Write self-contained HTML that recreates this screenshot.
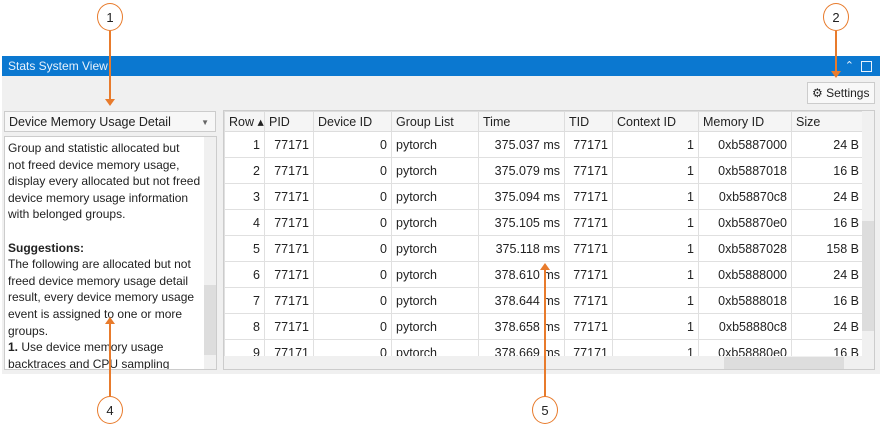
<!DOCTYPE html>
<html><head><style>
body{margin:0;width:882px;height:429px;background:#fff;font-family:"Liberation Sans",sans-serif;position:relative;overflow:hidden;color:#222}
.abs{position:absolute}
.bar{left:2px;top:56px;width:878px;height:20px;background:#0b78d0;color:#e8f2fc;font-size:12px;line-height:20px}
.panel{left:2px;top:76px;width:878px;height:298px;background:#f0f0f0}
.dd{left:4px;top:111px;width:212px;height:21px;background:#f7f7f7;border:1px solid #ccc;font-size:12.5px;line-height:21px;box-sizing:border-box;padding-left:4px}
.txt{left:4px;top:136px;width:213px;height:234px;background:#fff;border:1px solid #ccc;box-sizing:border-box;font-size:12px;line-height:16.6px;padding:3px 0 0 3px;overflow:hidden;white-space:nowrap}
table{border-collapse:collapse;font-size:12.5px;table-layout:fixed}
td,th{border:1px solid #e0e0e0;height:25px;padding:0 4px;white-space:nowrap;overflow:hidden}
th{font-weight:normal;text-align:left;background:#f5f5f5;height:19px;border-color:#ddd}
td{text-align:right}
td.l{text-align:left}
.circ{width:26px;height:28px;border:1.5px solid #e87b2c;border-radius:50%;font-size:13px;text-align:center;line-height:28px;box-sizing:border-box;background:#fff}
.ln{width:1.5px;background:#e87b2c}
</style></head><body>
<div class="abs bar"><span style="padding-left:6px">Stats System View</span>
<span class="abs" style="right:26px;top:0;font-size:11px">&#8963;</span>
<span class="abs" style="right:8px;top:5px;width:9px;height:9px;border:1px solid #e8f2fc"></span></div>
<div class="abs panel"></div>
<div class="abs" style="left:807px;top:82px;width:68px;height:22px;border:1px solid #ccc;background:#f8f8f8;box-sizing:border-box;font-size:12px;line-height:20px;padding-left:4px">⚙ Settings</div>
<div class="abs dd">Device Memory Usage Detail<span style="position:absolute;right:6px;font-size:8px;color:#666">▼</span></div>
<div class="abs txt">Group and statistic allocated but<br>not freed device memory usage,<br>display every allocated but not freed<br>device memory usage information<br>with belonged groups.<br><br><b>Suggestions:</b><br>The following are allocated but not<br>freed device memory usage detail<br>result, every device memory usage<br>event is assigned to one or more<br>groups.<br><b>1.</b> Use device memory usage<br>backtraces and CPU sampling</div>
<div class="abs" style="left:204px;top:137px;width:12px;height:232px;background:#f0f0f0"><div style="position:absolute;top:148px;width:12px;height:70px;background:#ddd"></div></div>
<div class="abs" style="left:223px;top:110px;width:652px;height:260px;background:#fff;border:1px solid #ccc;box-sizing:border-box;overflow:hidden">
<table style="width:639px">
<colgroup><col style="width:40px"><col style="width:49px"><col style="width:78px"><col style="width:87px"><col style="width:86px"><col style="width:48px"><col style="width:86px"><col style="width:93px"><col style="width:72px"></colgroup>
<tr><th>Row ▴</th><th>PID</th><th>Device ID</th><th>Group List</th><th>Time</th><th>TID</th><th>Context ID</th><th>Memory ID</th><th>Size</th></tr>
<tr><td>1</td><td>77171</td><td>0</td><td class="l">pytorch</td><td>375.037 ms</td><td>77171</td><td>1</td><td>0xb5887000</td><td>24 B</td></tr>
<tr><td>2</td><td>77171</td><td>0</td><td class="l">pytorch</td><td>375.079 ms</td><td>77171</td><td>1</td><td>0xb5887018</td><td>16 B</td></tr>
<tr><td>3</td><td>77171</td><td>0</td><td class="l">pytorch</td><td>375.094 ms</td><td>77171</td><td>1</td><td>0xb58870c8</td><td>24 B</td></tr>
<tr><td>4</td><td>77171</td><td>0</td><td class="l">pytorch</td><td>375.105 ms</td><td>77171</td><td>1</td><td>0xb58870e0</td><td>16 B</td></tr>
<tr><td>5</td><td>77171</td><td>0</td><td class="l">pytorch</td><td>375.118 ms</td><td>77171</td><td>1</td><td>0xb5887028</td><td>158 B</td></tr>
<tr><td>6</td><td>77171</td><td>0</td><td class="l">pytorch</td><td>378.610 ms</td><td>77171</td><td>1</td><td>0xb5888000</td><td>24 B</td></tr>
<tr><td>7</td><td>77171</td><td>0</td><td class="l">pytorch</td><td>378.644 ms</td><td>77171</td><td>1</td><td>0xb5888018</td><td>16 B</td></tr>
<tr><td>8</td><td>77171</td><td>0</td><td class="l">pytorch</td><td>378.658 ms</td><td>77171</td><td>1</td><td>0xb58880c8</td><td>24 B</td></tr>
<tr><td>9</td><td>77171</td><td>0</td><td class="l">pytorch</td><td>378.669 ms</td><td>77171</td><td>1</td><td>0xb58880e0</td><td>16 B</td></tr>
</table>
<div class="abs" style="left:638px;top:0;width:13px;height:245px;background:#f0f0f0"><div style="position:absolute;top:110px;width:13px;height:110px;background:#ddd"></div></div>
<div class="abs" style="left:0;top:245px;width:651px;height:14px;background:#f0f0f0"><div style="position:absolute;left:500px;top:1px;width:120px;height:12px;background:#ddd"></div></div>
</div>
<div class="abs ln" style="left:109px;top:31px;height:72px"></div>
<div class="abs" style="left:105px;top:99px;border-left:5px solid transparent;border-right:5px solid transparent;border-top:7px solid #e87b2c"></div>
<div class="abs circ" style="left:97px;top:3px">1</div>
<div class="abs ln" style="left:835px;top:31px;height:43px"></div>
<div class="abs" style="left:831px;top:71px;border-left:5px solid transparent;border-right:5px solid transparent;border-top:7px solid #e87b2c"></div>
<div class="abs circ" style="left:823px;top:3px">2</div>
<div class="abs ln" style="left:109px;top:322px;height:75px"></div>
<div class="abs" style="left:105px;top:317px;border-left:5px solid transparent;border-right:5px solid transparent;border-bottom:7px solid #e87b2c"></div>
<div class="abs circ" style="left:97px;top:396px">4</div>
<div class="abs ln" style="left:544px;top:268px;height:129px"></div>
<div class="abs" style="left:540px;top:263px;border-left:5px solid transparent;border-right:5px solid transparent;border-bottom:7px solid #e87b2c"></div>
<div class="abs circ" style="left:532px;top:396px">5</div>
</body></html>
